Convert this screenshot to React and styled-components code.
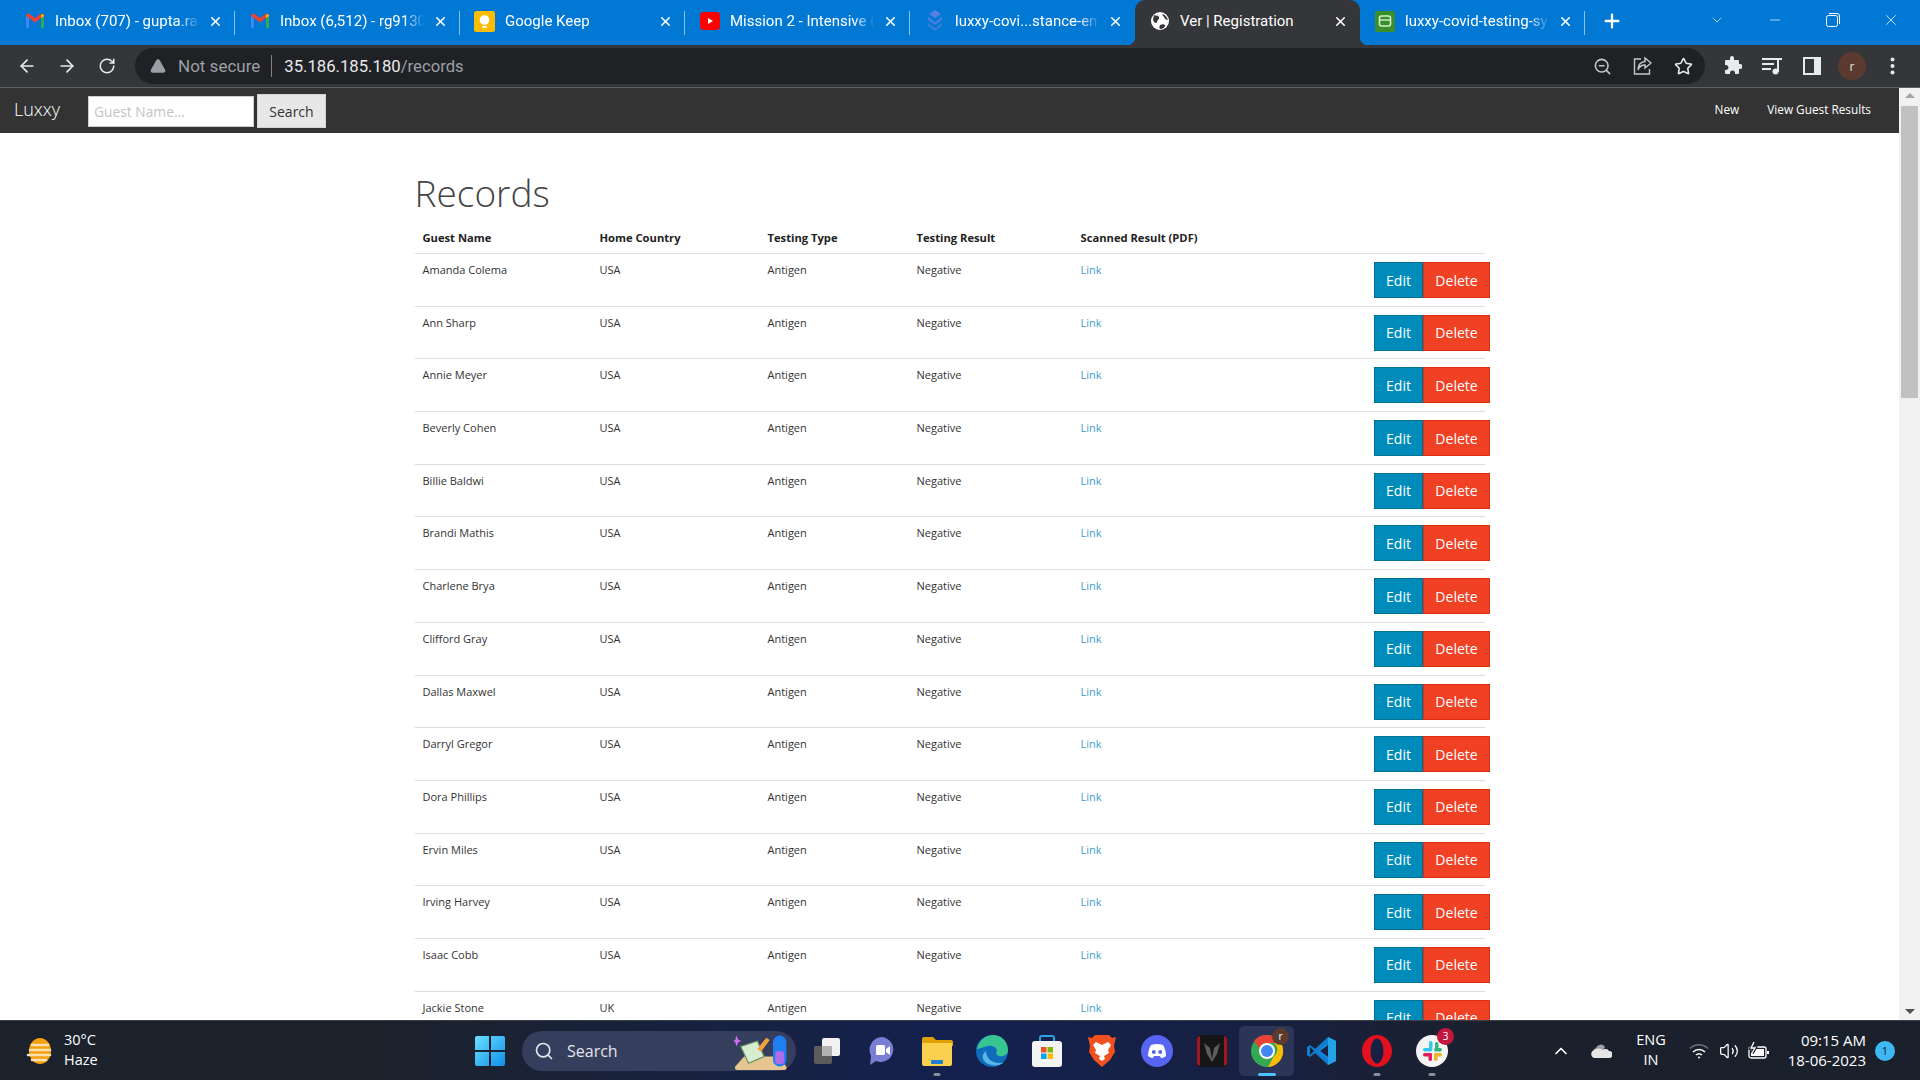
import React from 'react';
import styled, { createGlobalStyle } from 'styled-components';
import { ArrowLeft, ArrowRight, RotateCw, Star, ZoomOut, X, Plus, Minus, ChevronDown, ChevronUp, Search as SearchIcon, AlertTriangle, Volume2 } from 'lucide-react';

const GlobalStyle = createGlobalStyle`
    html, body, #root { margin: 0; padding: 0; height: 100%; overflow: hidden; }
    body { font-family: "Open Sans", "Liberation Sans", sans-serif; background: #fff; }
    * { box-sizing: border-box; }
`;

const Screen = styled.div`
    width: 1920px;
    height: 1080px;
    display: flex;
    flex-direction: column;
    overflow: hidden;
`;

/* ---- browser chrome ---- */
const TabStrip = styled.div`
    height: 45px;
    flex: none;
    background: #0078d4;
    display: flex;
    padding-left: 10px;
    align-items: stretch;
`;
const Tab = styled.div`
    width: 225px;
    height: 45px;
    display: flex;
    align-items: center;
    padding: 0 12px 3px 14px;
    position: relative;
    color: #fff;
    font-family: Roboto, "Liberation Sans", sans-serif;
    font-size: 15px;
    background: ${p => (p.$active ? '#35363a' : 'transparent')};
    border-radius: ${p => (p.$active ? '10px 10px 0 0' : '0')};
    &::before {
        content: '';
        display: ${p => (p.$active ? 'block' : 'none')};
        position: absolute;
        left: -8px;
        bottom: 0;
        width: 8px;
        height: 8px;
        background: radial-gradient(circle at 0 0, transparent 8px, #35363a 8.500px);
    }
    &::after {
        content: '';
        display: ${p => (p.$sep || p.$active ? 'block' : 'none')};
        position: absolute;
        ${p => (p.$active
            ? 'right: -8px; bottom: 0; width: 8px; height: 8px; background: radial-gradient(circle at 100% 0, transparent 8px, #35363a 8.500px);'
            : 'right: 0; top: 11px; height: 24px; width: 1px; background: #8cc2ee;')}
    }
`;
const TabFav = styled.span`
    width: 21px;
    height: 21px;
    flex: none;
    display: flex;
    align-items: center;
    justify-content: center;
    margin-right: 10px;
`;
const TabTitle = styled.span`
    flex: 1;
    white-space: nowrap;
    overflow: hidden;
    mask-image: ${p => (p.$fade ? 'linear-gradient(90deg, #000 85%, transparent 100%)' : 'none')};
`;
const NewTab = styled.div`
    width: 54px;
    display: flex;
    align-items: center;
    justify-content: center;
    color: #fff;
    padding-bottom: 3px;
`;
const WindowControls = styled.div`
    margin-left: auto;
    display: flex;
    align-items: center;
    color: #fff;
    padding-bottom: 5px;
`;
const WinButton = styled.div`
    width: 58px;
    display: flex;
    justify-content: center;
    align-items: center;
`;

const Toolbar = styled.div`
    height: 43px;
    flex: none;
    background: #35363a;
    display: flex;
    align-items: center;
    padding: 0 0 0 7px;
    color: #e8eaed;
    border-bottom: 1px solid #5f6063;
`;
const NavBtn = styled.div`
    width: 40px;
    display: flex;
    justify-content: center;
`;
const AddressBar = styled.div`
    width: 1570px;
    height: 36px;
    margin-left: 8px;
    background: #202124;
    border-radius: 18px;
    display: flex;
    align-items: center;
    padding: 0 12px 0 15px;
    font-family: Roboto, "Liberation Sans", sans-serif;
    font-size: 17px;
    color: #9aa0a6;
`;
const NotSecure = styled.span`
    margin-left: 12px;
    padding-right: 11px;
    border-right: 1px solid #80868b;
    line-height: 22px;
`;
const Url = styled.span`
    margin-left: 12px;
    font-size: 16.700px;
    color: #9aa0a6;
    b { color: #e8eaed; font-weight: 400; }
`;
const AddressIcons = styled.div`
    margin-left: auto;
    display: flex;
    gap: 21px;
    align-items: center;
`;
const ToolIcons = styled.div`
    display: flex;
    align-items: center;
    margin-left: 7px;
`;
const ToolSlot = styled.div`
    width: 40px;
    display: flex;
    justify-content: center;
`;
const Avatar = styled.span`
    width: 28px;
    height: 28px;
    border-radius: 50%;
    background: #5b3a30;
    color: #e8eaed;
    font-size: 12px;
    display: flex;
    align-items: center;
    justify-content: center;
`;

/* ---- page ---- */
const SiteNav = styled.div`
    height: 45px;
    flex: none;
    background: #333;
    display: flex;
    align-items: center;
    padding: 1px 28px 0 14px;
`;
const Brand = styled.div`
    width: 74px;
    color: #fff;
    font-size: 18px;
    font-weight: 300;
    padding-bottom: 4px;
`;
const SearchInput = styled.input`
    width: 166px;
    height: 31px;
    border: 1px solid #ccc;
    padding: 0 5px;
    font-family: inherit;
    font-size: 13.800px;
    color: #333;
    &::placeholder { color: #c4c4c4; }
`;
const SearchBtn = styled.button`
    width: 69px;
    height: 34px;
    margin-left: 3px;
    border: 1px solid #d4d4d4;
    background: #e7e7e7;
    color: #333;
    font-family: inherit;
    font-size: 14px;
    padding: 0;
`;
const NavLinks = styled.div`
    margin-left: auto;
    display: flex;
    gap: 28px;
    color: #fff;
    font-size: 11.800px;
    padding-bottom: 4px;
`;

const Body = styled.div`
    flex: 1;
    min-height: 0;
    display: flex;
`;
const Content = styled.div`
    flex: 1;
    min-width: 0;
    display: flex;
    flex-direction: column;
    overflow: hidden;
`;
const Main = styled.div`
    width: 1070px;
    margin: 0 auto;
`;
const Heading = styled.h1`
    margin: 0;
    padding-top: 35px;
    height: 98px;
    font-size: 37px;
    line-height: 50px;
    font-weight: 300;
    color: #444;
    letter-spacing: 0;
`;
const HeadRow = styled.div`
    display: grid;
    grid-template-columns: 177px 168px 149px 164px 1fr;
    padding-left: 8px;
    height: 23px;
    border-bottom: 1px solid #ddd;
`;
const HeadCell = styled.div`
    font-size: 11.200px;
    font-weight: 700;
    color: #222;
    line-height: 15px;
    margin-top: -1px;
`;
const Row = styled.div`
    display: grid;
    grid-template-columns: 177px 168px 149px 164px 1fr auto;
    padding-left: 8px;
    height: 52.700px;
    border-bottom: 1px solid #ddd;
`;
const Cell = styled.div`
    font-size: 11px;
    color: #333;
    padding-top: 8px;
    line-height: 15px;
`;
const LinkCell = styled.a`
    font-size: 11px;
    color: #3d9dcc;
    padding-top: 8px;
    line-height: 15px;
`;
const Actions = styled.div`
    display: flex;
    margin-right: -5px;
    padding-top: 8px;
`;
const ActionBtn = styled.button`
    height: 36px;
    width: ${p => (p.$danger ? '67px' : '49px')};
    background: ${p => (p.$danger ? '#f04124' : '#008cba')};
    border: 1px solid ${p => (p.$danger ? '#de2d0f' : '#007095')};
    color: #fff;
    font-family: inherit;
    font-size: 14px;
    padding: 0 0 0 1px;
`;

const Scrollbar = styled.div`
    width: 21px;
    flex: none;
    background: #f1f1f1;
    display: flex;
    flex-direction: column;
    align-items: center;
    padding-top: 5px;
`;
const ScrollThumb = styled.div`
    width: 17px;
    height: 292px;
    margin-top: 8px;
    background: #c1c1c1;
`;
const ScrollArrow = styled.div`
    width: 0;
    height: 0;
    border-left: 5px solid transparent;
    border-right: 5px solid transparent;
    ${p => (p.$down ? 'border-top: 5px solid #505050; margin-top: auto; margin-bottom: 6px;' : 'border-bottom: 5px solid #a3a3a3;')}
`;

/* ---- taskbar ---- */
const Taskbar = styled.div`
    height: 60px;
    flex: none;
    display: flex;
    align-items: center;
    color: #fff;
    background: linear-gradient(90deg, #1c222c 0%, #1c222c 20%, #14214f 50%, #172042 65%, #1b212c 78%);
    border-top: 1px solid #3a3f48;
    font-family: "Open Sans", sans-serif;
`;
const Weather = styled.div`
    width: 470px;
    display: flex;
    align-items: center;
    padding-left: 24px;
    gap: 8px;
    font-size: 14.500px;
    line-height: 20px;
`;
const WeatherText = styled.div`
    padding-bottom: 2px;
`;
const StartBtn = styled.div`
    width: 40px;
    display: flex;
    justify-content: center;
`;
const SearchPill = styled.div`
    width: 274px;
    height: 40px;
    margin-left: 12px;
    border-radius: 20px;
    background: #363e5e;
    display: flex;
    align-items: center;
    padding: 0 2px 0 12px;
    gap: 13px;
    font-size: 16px;
    color: #e3e5ea;
`;
const PillArt = styled.span`
    margin-left: auto;
    display: flex;
`;
const Apps = styled.div`
    display: flex;
    margin-left: 3px;
`;
const AppSlot = styled.div`
    width: 55px;
    height: 50px;
    display: flex;
    align-items: center;
    justify-content: center;
    position: relative;
    border-radius: 5px;
    background: ${p => (p.$active ? '#2a3558' : 'transparent')};
    &::after {
        content: '';
        display: ${p => (p.$mark ? 'block' : 'none')};
        position: absolute;
        bottom: 0;
        left: 50%;
        transform: translateX(-50%);
        height: 3px;
        border-radius: 2px;
        width: ${p => (p.$active ? '18px' : '7px')};
        background: ${p => (p.$active ? '#4cc2ff' : '#8a8f9a')};
    }
`;
const AppBadge = styled.span`
    position: absolute;
    top: 2px;
    right: 5px;
    width: 17px;
    height: 17px;
    border-radius: 50%;
    background: ${p => (p.$dark ? '#5b3a30' : '#c4173f')};
    color: #fff;
    font-size: 10px;
    display: flex;
    align-items: center;
    justify-content: center;
`;
const Tray = styled.div`
    margin-left: auto;
    display: flex;
    align-items: center;
    padding-right: 25px;
`;
const TrayIcon = styled.div`
    width: ${p => p.$w || 31}px;
    display: flex;
    justify-content: center;
`;
const Lang = styled.div`
    width: 60px;
    margin-right: 3px;
    text-align: center;
    font-size: 14.500px;
    line-height: 20px;
    padding-bottom: 1px;
`;
const Clock = styled.div`
    width: 92px;
    text-align: right;
    font-size: 15px;
    line-height: 20px;
    padding-bottom: 2px;
`;
const Bubble = styled.span`
    width: 20px;
    height: 20px;
    margin-left: 9px;
    border-radius: 50%;
    background: #3db8f5;
    color: #10202c;
    font-size: 11px;
    display: flex;
    align-items: center;
    justify-content: center;
`;

/* ---- drawn icons ---- */
const GmailIcon = () => (
    <svg width="20" height="16" viewBox="0 0 20 16">
        <path d="M1 15V3l3 2v10H2a1 1 0 0 1-1-1z" fill="#4285f4" />
        <path d="M19 15V3l-3 2v10h2a1 1 0 0 0 1-1z" fill="#34a853" />
        <path d="M4 5 1 3c0-2 2-3 3.500-2L10 5l5.500-4C17 0 19 1 19 3l-3 2-6 4.500z" fill="#ea4335" />
        <path d="M16 2v3l3-2c0-1-1.500-2.500-3-1z" fill="#fbbc04" />
    </svg>
);
const KeepIcon = () => (
    <svg width="21" height="21" viewBox="0 0 21 21">
        <rect width="21" height="21" rx="2.500" fill="#fbbc04" />
        <circle cx="10.500" cy="9" r="4.800" fill="#fff" />
        <rect x="8.200" y="15" width="4.600" height="1.800" fill="#fff" />
    </svg>
);
const YoutubeIcon = () => (
    <svg width="20" height="18" viewBox="0 0 20 18">
        <rect width="20" height="18" y="0" rx="4" fill="#f00" />
        <path d="M8 6l5 3-5 3z" fill="#fff" />
    </svg>
);
const StackIcon = () => (
    <svg width="18" height="22" viewBox="0 0 18 22" fill="#5b7fe0">
        <path d="M9 0l6 4-6 4-6-4z" />
        <path d="M2 7l7 5 7-5v3l-7 5-7-5z" opacity=".8" />
        <path d="M2 13l7 5 7-5v3l-7 5-7-5z" opacity=".6" />
    </svg>
);
const GlobeIcon = () => (
    <svg width="18" height="18" viewBox="0 0 18 18">
        <circle cx="9" cy="9" r="9" fill="#fff" />
        <path d="M3 3c2 1 4 0 5 2s-2 3-2 5-3 1-4-2zM12 2c2 1 4 3 5 6-2 0-3-1-4-3s-2-1-1-3zM9 13c2-1 4-1 5 0s-2 4-4 4-2-2-1-4z" fill="#35363a" />
    </svg>
);
const SheetIcon = () => (
    <svg width="20" height="21" viewBox="0 0 20 21">
        <rect width="20" height="21" rx="2" fill="#3b8e2c" />
        <rect x="4.500" y="5" width="11" height="10" rx="2" fill="none" stroke="#d5efc8" strokeWidth="1.600" />
        <path d="M4.500 9h11" stroke="#d5efc8" strokeWidth="1.400" />
    </svg>
);
const ShareIcon = () => (
    <svg width="20" height="20" viewBox="0 0 20 20" fill="none" stroke="#c4c7ca" strokeWidth="1.400">
        <path d="M8 3H1.500v15h15v-5" />
        <path d="M12 2l6 5-6 5V9C8 9 6 11 5 14c0-5 3-8 7-8.500z" />
    </svg>
);
const PuzzleIcon = () => (
    <svg width="20" height="20" viewBox="0 0 20 20" fill="#e8eaed">
        <path d="M8 2a2 2 0 0 1 4 0v2h4a1 1 0 0 1 1 1v3h1a2.500 2.500 0 0 1 0 5h-1v4a1 1 0 0 1-1 1h-3v-1a2.500 2.500 0 0 0-5 0v1H4a1 1 0 0 1-1-1v-3h1a2.500 2.500 0 0 0 0-5H3V5a1 1 0 0 1 1-1h4z" />
    </svg>
);
const QueueIcon = () => (
    <svg width="20" height="18" viewBox="0 0 20 18" fill="#e8eaed">
        <rect y="1" width="15" height="2" />
        <rect y="6" width="12" height="2" />
        <rect y="11" width="9" height="2" />
        <rect x="16" y="1" width="4" height="2" />
        <rect x="15" y="1" width="2" height="14" />
        <circle cx="13.500" cy="14.500" r="3" />
    </svg>
);
const SidePanelIcon = () => (
    <svg width="18" height="18" viewBox="0 0 18 18">
        <rect width="18" height="18" fill="#e8eaed" />
        <rect x="2" y="2" width="9" height="14" fill="#35363a" />
    </svg>
);
const DotsIcon = () => (
    <svg width="5" height="18" viewBox="0 0 5 18" fill="#e8eaed">
        <circle cx="2.500" cy="2.500" r="2" />
        <circle cx="2.500" cy="9" r="2" />
        <circle cx="2.500" cy="15.500" r="2" />
    </svg>
);
const RestoreIcon = () => (
    <svg width="14" height="14" viewBox="0 0 14 14" fill="none" stroke="#fff">
        <rect x="0.500" y="2.500" width="11" height="11" rx="2" />
        <path d="M3 .5h8a2.500 2.500 0 0 1 2.500 2.500v8" />
    </svg>
);
const HazeIcon = () => (
    <svg width="32" height="32" viewBox="0 0 32 32">
        <ellipse cx="16" cy="16" rx="11" ry="13" fill="#f59f0a" />
        <path d="M8 10h16M6 15h20M4 20h22M8 25h14" stroke="#f6e2b5" strokeWidth="2.600" strokeLinecap="round" />
    </svg>
);
const WinLogo = () => (
    <svg width="30" height="30" viewBox="0 0 30 30">
        <defs>
            <linearGradient id="win" x1="0" y1="0" x2="1" y2="1">
                <stop offset="0" stopColor="#6be0ff" />
                <stop offset="1" stopColor="#0f8fe8" />
            </linearGradient>
        </defs>
        <path d="M0 2a2 2 0 0 1 2-2h12v14H0zM16 0h12a2 2 0 0 1 2 2v12H16zM0 16h14v14H2a2 2 0 0 1-2-2zM16 16h14v12a2 2 0 0 1-2 2H16z" fill="url(#win)" />
    </svg>
);
const PillPicture = () => (
    <svg width="62" height="40" viewBox="0 0 54 36">
        <path d="M2 32l8-9h30l8 9a2 2 0 0 1-2 3H4a2 2 0 0 1-2-3z" fill="#e6c690" />
        <path d="M7 14l15-5 6 14-14 6z" fill="#d8ecd2" stroke="#6a8f5a" />
        <path d="M22 16l8-10 3 2-8 11z" fill="#f3a33a" />
        <rect x="36" y="4" width="12" height="28" rx="6" fill="#1f7ef0" />
        <rect x="38" y="18" width="8" height="12" rx="3" fill="#b06ce8" />
        <path d="M3 4l2 4 3 1-3 1-2 4-1-4-2-1 2-1z" fill="#d16ef0" />
    </svg>
);
const TaskViewIcon = () => (
    <svg width="28" height="28" viewBox="0 0 28 28">
        <rect x="1" y="9" width="18" height="18" rx="2" fill="#5c5c5c" />
        <rect x="9" y="1" width="18" height="18" rx="2" fill="#f2f2f2" />
        <rect x="9" y="9" width="10" height="10" fill="#b3b3b3" />
    </svg>
);
const MeetIcon = () => (
    <svg width="26" height="30" viewBox="0 0 26 30">
        <path d="M13 1a12.500 12.500 0 1 1-6 24L1 29l1-9A13 13 0 0 1 13 1z" fill="#7b7fd4" />
        <rect x="7" y="9" width="9" height="10" rx="1.500" fill="#fff" />
        <path d="M17 13l4-3v9l-4-3z" fill="#fff" />
    </svg>
);
const FolderIcon = () => (
    <svg width="32" height="30" viewBox="0 0 32 30">
        <path d="M1 3a2 2 0 0 1 2-2h9l3 3h15a2 2 0 0 1 2 2v4H1z" fill="#e0a106" />
        <path d="M1 7h30v21a2 2 0 0 1-2 2H3a2 2 0 0 1-2-2z" fill="#fbd04f" />
        <rect x="10" y="24" width="12" height="4" rx="1" fill="#1d7fd4" />
    </svg>
);
const EdgeIcon = () => (
    <svg width="32" height="32" viewBox="0 0 32 32">
        <circle cx="16" cy="16" r="16" fill="#0f6cbd" />
        <path d="M1 14C3 5 10 0 17 0c8 0 15 6 15 15 0 5-5 7-9 6-3-1-3-3-2-5 0-3-4-6-9-5-6 1-9 3-11 3z" fill="#38c690" />
        <path d="M10 16c0 7 6 12 13 12 3 0 4 0 5-1-4 5-17 5-21-3-1-3 0-6 3-8z" fill="#58b5e8" />
    </svg>
);
const StoreIcon = () => (
    <svg width="30" height="32" viewBox="0 0 30 32">
        <path d="M8 7V3a2 2 0 0 1 2-2h10a2 2 0 0 1 2 2v4" fill="none" stroke="#2aa3e0" strokeWidth="2" />
        <rect y="6" width="30" height="26" rx="3" fill="#f4f4f4" />
        <rect x="9" y="12" width="5.500" height="5.500" fill="#f25022" />
        <rect x="15.500" y="12" width="5.500" height="5.500" fill="#7fba00" />
        <rect x="9" y="18.500" width="5.500" height="5.500" fill="#00a4ef" />
        <rect x="15.500" y="18.500" width="5.500" height="5.500" fill="#ffb900" />
    </svg>
);
const BraveIcon = () => (
    <svg width="28" height="32" viewBox="0 0 28 32">
        <path d="M7 0h14l3 3 4-1-2 9 1 6-5 8-8 7-8-7-5-8 1-6L0 2l4 1z" fill="#f1501f" />
        <path d="M14 10l-6-3-3 3 3 5-1 3 5 3-1 3 3 2 3-2-1-3 5-3-1-3 3-5-3-3z" fill="#fff" />
    </svg>
);
const DiscordIcon = () => (
    <svg width="32" height="32" viewBox="0 0 32 32">
        <circle cx="16" cy="16" r="16" fill="#5865f2" />
        <path d="M10 10c4-1.500 8-1.500 12 0 2 3 3 7 3 11-2 1.500-3.500 2-5 2l-1-2h-6l-1 2c-1.500 0-3-.5-5-2 0-4 1-8 3-11z" fill="#fff" />
        <circle cx="12.800" cy="17" r="2" fill="#5865f2" />
        <circle cx="19.200" cy="17" r="2" fill="#5865f2" />
    </svg>
);
const PredatorIcon = () => (
    <svg width="30" height="32" viewBox="0 0 30 32">
        <rect width="30" height="32" rx="4" fill="#161616" />
        <path d="M0 5a4 4 0 0 1 3-4v30a4 4 0 0 1-3-4zM30 5a4 4 0 0 0-3-4v30a4 4 0 0 0 3-4z" fill="#a5161d" />
        <path d="M7 8l6 5 2 11 2-11 6-5-3 11-5 8-5-8z" fill="#5d5d5d" />
    </svg>
);
const ChromeIcon = () => (
    <svg width="32" height="32" viewBox="0 0 32 32">
        <circle cx="16" cy="16" r="16" fill="#34a853" />
        <path d="M16 0a16 16 0 0 1 14 8H16a8 8 0 0 0-7.500 5L3 6a16 16 0 0 1 13-6z" fill="#ea4335" />
        <path d="M30 8a16 16 0 0 1-13 24l6-11a8 8 0 0 0 0-13z" fill="#fbbc04" />
        <circle cx="16" cy="16" r="8" fill="#fff" />
        <circle cx="16" cy="16" r="6" fill="#4285f4" />
    </svg>
);
const VscodeIcon = () => (
    <svg width="30" height="30" viewBox="0 0 30 30">
        <path d="M21 1l8 4v20l-8 4L8 17l-5 4-3-2v-8l3-2 5 4z" fill="#0e7fd0" />
        <path d="M21 1l8 4v20l-8 4zM21 8l-9 7 9 7z" fill="#23a3ea" />
        <path d="M3 11l4 4-4 4z" fill="#1b1f2e" />
        <path d="M21 9l-8 6 8 6z" fill="#161f45" />
    </svg>
);
const OperaIcon = () => (
    <svg width="30" height="32" viewBox="0 0 30 32">
        <ellipse cx="15" cy="16" rx="15" ry="16" fill="#e3101f" />
        <ellipse cx="15" cy="16" rx="6.500" ry="12.500" fill="#172042" />
    </svg>
);
const SlackIcon = () => (
    <svg width="32" height="32" viewBox="0 0 32 32">
        <circle cx="16" cy="16" r="16" fill="#f4f4f4" />
        <rect x="13" y="6" width="3.500" height="10" rx="1.700" fill="#36c5f0" />
        <rect x="7" y="13" width="9" height="3.500" rx="1.700" fill="#36c5f0" />
        <rect x="19" y="7" width="3.500" height="9" rx="1.700" fill="#2eb67d" />
        <rect x="18" y="13" width="8" height="3.500" rx="1.700" fill="#2eb67d" />
        <rect x="18" y="18" width="8" height="3.500" rx="1.700" fill="#ecb22e" />
        <rect x="18" y="18" width="3.500" height="8" rx="1.700" fill="#ecb22e" />
        <rect x="7" y="18" width="9" height="3.500" rx="1.700" fill="#e01e5a" />
        <rect x="12.500" y="18" width="3.500" height="8" rx="1.700" fill="#e01e5a" />
    </svg>
);
const CloudIcon = () => (
    <svg width="21" height="14" viewBox="0 0 21 14">
        <path d="M5 4a5 5 0 0 1 9-1l-3 6H2a4 4 0 0 1 3-5z" fill="#9a9da3" />
        <path d="M4 14a4 4 0 0 1-1-7.800C7 3 11 5 12 6a4 4 0 0 1 6 1 3.500 3.500 0 0 1 0 7z" fill="#e6e6e6" />
    </svg>
);
const WifiIcon = () => (
    <svg width="20" height="16" viewBox="0 0 20 16" fill="none" stroke="#fff" strokeWidth="1.500">
        <path d="M1 5.500c5-5 13-5 18 0" stroke="#6c7078" />
        <path d="M4 9c3.500-3.500 8.500-3.500 12 0" />
        <path d="M7 12c1.800-1.600 4.200-1.600 6 0" />
        <circle cx="10" cy="14.500" r="1" fill="#fff" stroke="none" />
    </svg>
);
const BatteryIcon = () => (
    <svg width="22" height="18" viewBox="0 0 22 18" fill="none" stroke="#fff" strokeWidth="1.300">
        <rect x="1" y="5" width="17" height="11" rx="2" />
        <rect x="3" y="7" width="13" height="7" fill="#fff" stroke="none" />
        <path d="M20 9v3" strokeWidth="2" />
        <path d="M6 0L3 6h4L4 11" stroke="#1c222c" strokeWidth="3.500" />
        <path d="M6 0L3 6h4L4 11" />
    </svg>
);

// titles stop where the reference's tab fade cuts them off
const tabs = [
    { icon: <GmailIcon />, title: 'Inbox (707) - gupta.ra', sep: true },
    { icon: <GmailIcon />, title: 'Inbox (6,512) - rg9130', sep: true },
    { icon: <KeepIcon />, title: 'Google Keep', sep: true },
    { icon: <YoutubeIcon />, title: 'Mission 2 - Intensive (', sep: true },
    { icon: <StackIcon />, title: 'luxxy-covi...stance-en', sep: false },
    { icon: <GlobeIcon />, title: 'Ver | Registration', active: true },
    { icon: <SheetIcon />, title: 'luxxy-covid-testing-sy', sep: true },
];

const names = [
    'Amanda Colema', 'Ann Sharp', 'Annie Meyer', 'Beverly Cohen', 'Billie Baldwi',
    'Brandi Mathis', 'Charlene Brya', 'Clifford Gray', 'Dallas Maxwel', 'Darryl Gregor',
    'Dora Phillips', 'Ervin Miles', 'Irving Harvey', 'Isaac Cobb', 'Jackie Stone',
];

const apps = [
    { icon: <TaskViewIcon /> },
    { icon: <MeetIcon /> },
    { icon: <FolderIcon />, mark: true },
    { icon: <EdgeIcon /> },
    { icon: <StoreIcon /> },
    { icon: <BraveIcon /> },
    { icon: <DiscordIcon /> },
    { icon: <PredatorIcon /> },
    { icon: <ChromeIcon />, mark: true, active: true, badge: 'r', dark: true },
    { icon: <VscodeIcon /> },
    { icon: <OperaIcon />, mark: true },
    { icon: <SlackIcon />, mark: true, badge: '3' },
];

function App() {
    return (
        <Screen>
            <GlobalStyle />
            <TabStrip>
                {tabs.map((tab) => (
                    <Tab key={tab.title} $active={tab.active} $sep={tab.sep}>
                        <TabFav>{tab.icon}</TabFav>
                        <TabTitle $fade={!tab.active}>{tab.title}</TabTitle>
                        <X size={15} strokeWidth={2.5} style={{ flex: 'none', marginLeft: 8 }} />
                    </Tab>
                ))}
                <NewTab><Plus size={22} strokeWidth={2.5} /></NewTab>
                <WindowControls>
                    <WinButton><ChevronDown size={16} strokeWidth={1} /></WinButton>
                    <WinButton><Minus size={16} strokeWidth={1} /></WinButton>
                    <WinButton><RestoreIcon /></WinButton>
                    <WinButton><X size={18} strokeWidth={1} /></WinButton>
                </WindowControls>
            </TabStrip>

            <Toolbar>
                <NavBtn><ArrowLeft size={20} /></NavBtn>
                <NavBtn><ArrowRight size={20} /></NavBtn>
                <NavBtn><RotateCw size={18} /></NavBtn>
                <AddressBar>
                    <AlertTriangle size={16} fill="#9aa0a6" color="#9aa0a6" />
                    <NotSecure>Not secure</NotSecure>
                    <Url><b>35.186.185.180</b>/records</Url>
                    <AddressIcons>
                        <ZoomOut size={19} color="#c4c7ca" />
                        <ShareIcon />
                        <Star size={19} color="#e8eaed" />
                    </AddressIcons>
                </AddressBar>
                <ToolIcons>
                    <ToolSlot><PuzzleIcon /></ToolSlot>
                    <ToolSlot><QueueIcon /></ToolSlot>
                    <ToolSlot><SidePanelIcon /></ToolSlot>
                    <ToolSlot><Avatar>r</Avatar></ToolSlot>
                    <ToolSlot><DotsIcon /></ToolSlot>
                </ToolIcons>
            </Toolbar>

            <Body>
                <Content>
                    <SiteNav>
                        <Brand>Luxxy</Brand>
                        <SearchInput placeholder="Guest Name..." />
                        <SearchBtn>Search</SearchBtn>
                        <NavLinks>
                            <span>New</span>
                            <span>View Guest Results</span>
                        </NavLinks>
                    </SiteNav>
                    <Main>
                        <Heading>Records</Heading>
                        <HeadRow>
                            <HeadCell>Guest Name</HeadCell>
                            <HeadCell>Home Country</HeadCell>
                            <HeadCell>Testing Type</HeadCell>
                            <HeadCell>Testing Result</HeadCell>
                            <HeadCell>Scanned Result (PDF)</HeadCell>
                        </HeadRow>
                        {names.map((name, i) => (
                            <Row key={name}>
                                <Cell>{name}</Cell>
                                <Cell>{i === 14 ? 'UK' : 'USA'}</Cell>
                                <Cell>Antigen</Cell>
                                <Cell>Negative</Cell>
                                <LinkCell>Link</LinkCell>
                                <Actions>
                                    <ActionBtn>Edit</ActionBtn>
                                    <ActionBtn $danger>Delete</ActionBtn>
                                </Actions>
                            </Row>
                        ))}
                    </Main>
                </Content>
                <Scrollbar>
                    <ScrollArrow />
                    <ScrollThumb />
                    <ScrollArrow $down />
                </Scrollbar>
            </Body>

            <Taskbar>
                <Weather>
                    <HazeIcon />
                    <WeatherText>30°C<br />Haze</WeatherText>
                </Weather>
                <StartBtn><WinLogo /></StartBtn>
                <SearchPill>
                    <SearchIcon size={20} />
                    Search
                    <PillArt><PillPicture /></PillArt>
                </SearchPill>
                <Apps>
                    {apps.map((app, i) => (
                        <AppSlot key={i} $mark={app.mark} $active={app.active}>
                            {app.icon}
                            {app.badge && <AppBadge $dark={app.dark}>{app.badge}</AppBadge>}
                        </AppSlot>
                    ))}
                </Apps>
                <Tray>
                    <TrayIcon $w={40}><ChevronUp size={20} /></TrayIcon>
                    <TrayIcon $w={40}><CloudIcon /></TrayIcon>
                    <Lang>ENG<br />IN</Lang>
                    <TrayIcon $w={30}><WifiIcon /></TrayIcon>
                    <TrayIcon $w={30}><Volume2 size={20} strokeWidth={1.5} /></TrayIcon>
                    <TrayIcon $w={30}><BatteryIcon /></TrayIcon>
                    <Clock>09:15 AM<br />18-06-2023</Clock>
                    <Bubble>1</Bubble>
                </Tray>
            </Taskbar>
        </Screen>
    );
}

export default App;
